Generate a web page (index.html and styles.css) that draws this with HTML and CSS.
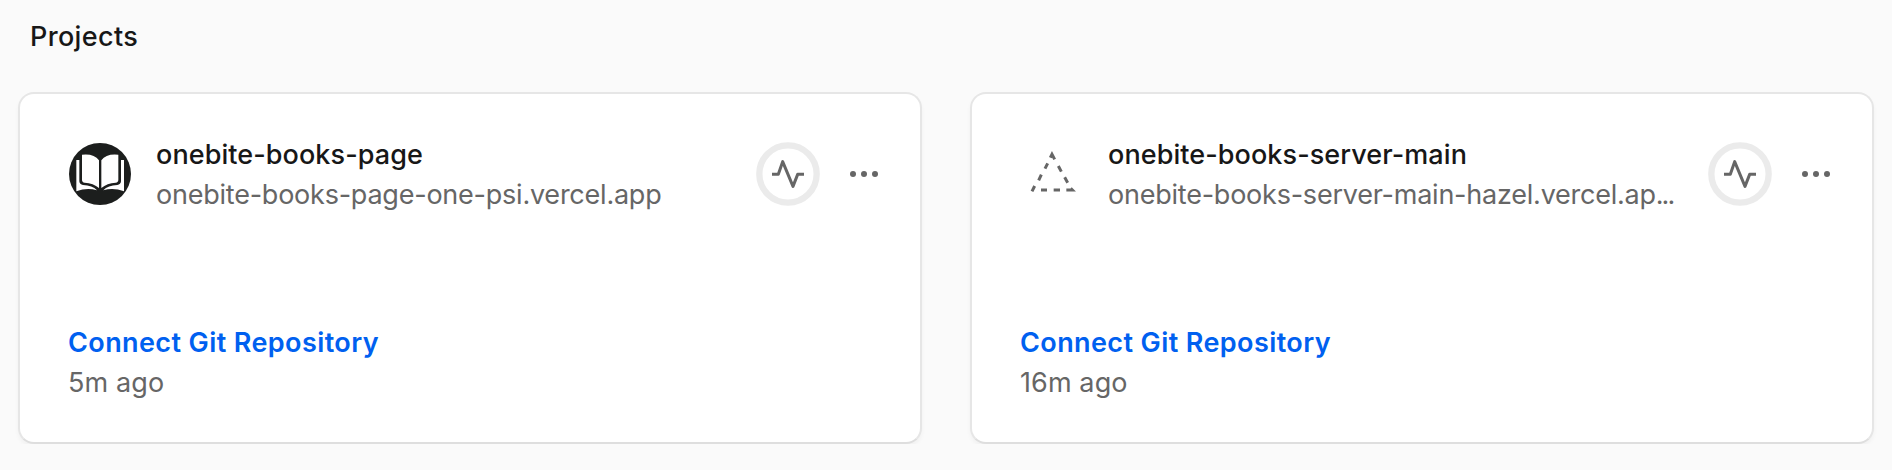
FILE: index.html
```html
<!DOCTYPE html>
<html lang="en">
    <head>
        <meta charset="UTF-8">
        <meta name="viewport" content="width=device-width, initial-scale=1.0">
        <title>Projects</title>
        <link rel="stylesheet" href="styles.css">
    </head>
    <body>
        <h2 class="heading">Projects</h2>
        <div class="projects">
            <div class="card">
                <div class="card-header">
                    <svg class="avatar" viewBox="54 36 192 192">
                        <circle cx="150" cy="132" r="93" fill="#1c1e1d"/>
                        <g fill="#fff">
                            <path d="M96 74Q132 70 147 91V174Q130 159 104 158Q96 157 96 149Z"/>
                            <path d="M205 74Q169 70 154 91V174Q171 159 197 158Q205 157 205 149Z"/>
                            <path d="M79 90H88V154Q89 164 99 165Q127 166 141 181Q111 172 79 184Z"/>
                            <path d="M222 90H213V154Q212 164 202 165Q174 166 160 181Q190 172 222 184Z"/>
                        </g>
                    </svg>
                    <div class="info">
                        <div class="name">onebite-books-page</div>
                        <div class="domain">onebite-books-page-one-psi.vercel.app</div>
                    </div>
                    <div class="actions">
                        <svg class="status" viewBox="48 36 192 192">
                            <circle cx="144" cy="132" r="86" fill="none" stroke="#ebebeb" stroke-width="19"/>
                            <path d="M96 133H115L128 95L159 169L173 133H192" fill="none" stroke="#666" stroke-width="9" stroke-linejoin="round"/>
                        </svg>
                        <svg class="menu" viewBox="276 36 192 192" fill="#666">
                            <circle cx="339" cy="132" r="9"/>
                            <circle cx="372" cy="132" r="9"/>
                            <circle cx="405" cy="132" r="9"/>
                        </svg>
                    </div>
                </div>
                <div class="card-footer">
                    <a class="connect">Connect Git Repository</a>
                    <div class="time">5m ago</div>
                </div>
            </div>

            <div class="card">
                <div class="card-header">
                    <svg class="avatar" viewBox="30 36 192 192">
                        <path d="M66 184L74 168M86 151L94 134M105 116L113 100M121 83L126 73L134 88M145 108L154 125M164 142L173 158M93 180H111M131 180H150M169 180H187L182 175" fill="none" stroke="#666" stroke-width="9"/>
                    </svg>
                    <div class="info">
                        <div class="name">onebite-books-server-main</div>
                        <div class="domain">onebite-books-server-main-hazel.vercel.ap<span class="more">...</span></div>
                    </div>
                    <div class="actions">
                        <svg class="status" viewBox="48 36 192 192">
                            <circle cx="144" cy="132" r="86" fill="none" stroke="#ebebeb" stroke-width="19"/>
                            <path d="M96 133H115L128 95L159 169L173 133H192" fill="none" stroke="#666" stroke-width="9" stroke-linejoin="round"/>
                        </svg>
                        <svg class="menu" viewBox="276 36 192 192" fill="#666">
                            <circle cx="339" cy="132" r="9"/>
                            <circle cx="372" cy="132" r="9"/>
                            <circle cx="405" cy="132" r="9"/>
                        </svg>
                    </div>
                </div>
                <div class="card-footer">
                    <a class="connect">Connect Git Repository</a>
                    <div class="time">16m ago</div>
                </div>
            </div>
        </div>
    </body>
</html>
```
FILE: styles.css
```css
* {
    box-sizing: border-box;
}
body {
    margin: 0;
    padding: 17px 18px 0;
    background: #fafafa;
    color: #171717;
    font-family: Inter, "Liberation Sans", sans-serif;
    font-size: 27px;
    line-height: 40px;
}
.heading {
    margin: 0 0 35px;
    padding-left: 12px;
    font-size: 27px;
    font-weight: 500;
    letter-spacing: 0.35px;
}
.projects {
    display: grid;
    grid-template-columns: 904px 904px;
    gap: 48px;
}
.card {
    display: flex;
    flex-direction: column;
    justify-content: space-between;
    height: 352px;
    padding: 39px 24px 39px 48px;
    border: 2px solid #e6e6e6;
    border-bottom-color: #dedede;
    border-radius: 16px;
    background: #fff;
    box-shadow: 0 3px 4px rgba(0, 0, 0, 0.04);
}
.card-header {
    display: flex;
    align-items: center;
}
.avatar {
    flex: none;
    width: 64px;
    height: 64px;
    margin-right: 24px;
}
.info {
    flex: 1;
    min-width: 0;
    margin-right: 24px;
    padding-top: 2px;
}
.name {
    font-weight: 500;
    letter-spacing: 0.08px;
}
.domain {
    overflow: hidden;
    height: 40px;
    color: #666;
    letter-spacing: -0.23px;
    white-space: nowrap;
}
.more {
    letter-spacing: -2px;
}
.actions {
    display: flex;
    flex: none;
    gap: 12px;
}
.status,
.menu {
    width: 64px;
    height: 64px;
}
.connect {
    color: #0060f0;
    font-weight: 600;
    letter-spacing: 0.4px;
}
.time {
    color: #666;
    letter-spacing: 0.1px;
}
```
